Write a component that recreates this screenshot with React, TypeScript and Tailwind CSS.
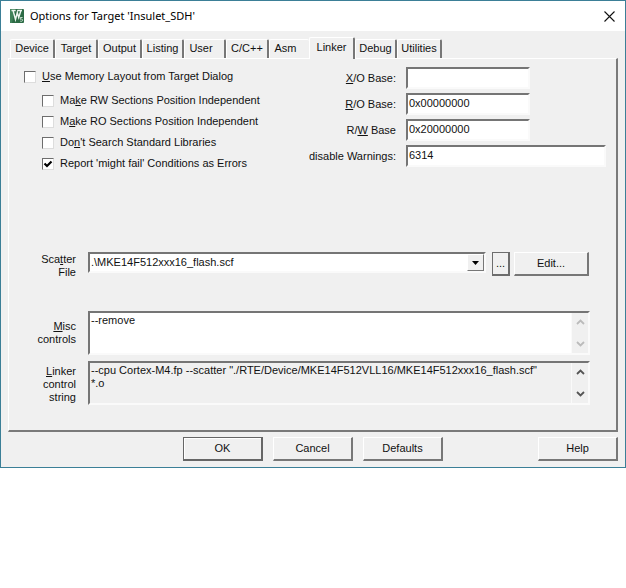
import { useState, type ReactNode } from "react";
import clsx from "clsx";

const TABS = [
  { name: "Device", width: "w-[45px]" },
  { name: "Target", width: "w-[43px]" },
  { name: "Output", width: "w-[44px]" },
  { name: "Listing", width: "w-[42px]" },
  { name: "User", width: "w-[42px]" },
  { name: "C/C++", width: "w-[43px]" },
  { name: "Asm", width: "w-[40px]" },
  { name: "Linker", width: "w-[46px]" },
  { name: "Debug", width: "w-[42px]" },
  { name: "Utilities", width: "w-[45px]" },
];

const sunken =
  "border-2 border-t-[#757575] border-l-[#757575] border-r-[#fafafa] border-b-[#fafafa]";

export default function App() {
  return (
    <main className="min-h-screen bg-white font-['Liberation_Sans',Arial,sans-serif] text-[11px] leading-[13px] text-[#111]">
      <section className="border border-[#3b7f97] bg-[#f0f0f0]">
        <TitleBar title="Options for Target 'Insulet_SDH'" />
        <div className="px-[7px] pt-[6px] pb-[6px]">
          <TabStrip />
          <LinkerPage />
          <footer className="mt-[5px] flex items-center gap-[10px] pl-[175px]">
            <DialogButton isDefault>OK</DialogButton>
            <DialogButton>Cancel</DialogButton>
            <DialogButton>Defaults</DialogButton>
            <div className="ml-auto flex">
              <DialogButton>Help</DialogButton>
            </div>
          </footer>
        </div>
      </section>
    </main>
  );
}

function TitleBar({ title }: { title: string }) {
  return (
    <header className="flex h-[30px] items-center bg-white pr-[10px] pl-[9px]">
      <AppIcon />
      <h1 className="ml-[6px] font-['Noto_Sans','Open_Sans',sans-serif] text-[11px] leading-4 text-black">
        {title}
      </h1>
      <button type="button" aria-label="Close" className="ml-auto">
        <svg width="11" height="11" viewBox="0 0 11 11" className="block">
          <path d="M.5.5l10 10M10.5.5l-10 10" stroke="#111" strokeWidth="1.1" />
        </svg>
      </button>
    </header>
  );
}

function AppIcon() {
  return (
    <svg width="14" height="14" viewBox="0 0 14 14" aria-hidden="true">
      <rect width="14" height="14" rx="1" fill="#2c6b45" />
      <path d="M0 14V1a1 1 0 0 1 1-1h4L2 14z" fill="#3f8259" />
      <path
        d="M1.500 1.500h4.200M7.500 1.500h4.500M3.200 2l2.300 8.500L7.300 3.500l1.400 5L10.800 2"
        fill="none"
        stroke="#eef6f0"
        strokeWidth="1.400"
      />
      <path
        d="M12.600 8.500h-2.300v1.800c1.300-.5 2.300-.1 2.300.9s-1.100 1.400-2.400.9"
        fill="none"
        stroke="#c3dccb"
      />
    </svg>
  );
}

function TabStrip() {
  const [active, setActive] = useState("Linker");
  return (
    <div role="tablist" className="flex h-[21px] items-end pl-[2px]">
      {TABS.map((tab) => {
        const selected = tab.name === active;
        return (
          <button
            key={tab.name}
            type="button"
            role="tab"
            aria-selected={selected}
            onClick={() => setActive(tab.name)}
            className={clsx(
              "shrink-0 rounded-t-xs border-t border-l border-t-white border-l-white text-center whitespace-nowrap",
              tab.width,
              selected
                ? "relative -mb-px h-[22px] border-r-2 border-r-[#777] bg-[#f0f0f0] pb-[3px]"
                : "h-[19px] pb-px",
              !selected && tab.name !== "Asm" && "border-r-2 border-r-[#777]",
              tab.name === "Asm" && "pr-[8px]",
              tab.name === "User" && "pr-[7px]",
            )}
          >
            {tab.name}
          </button>
        );
      })}
    </div>
  );
}

function LinkerPage() {
  return (
    <div
      role="tabpanel"
      className="border-t border-r-2 border-b-2 border-l border-t-white border-r-[#7a7a7a] border-b-[#7a7a7a] border-l-white pr-[10px] pb-[25px] pl-[15px]"
    >
      <div className="flex items-start">
        <div className="flex flex-col pt-[11px]">
          <CheckBox>
            <u>U</u>se Memory Layout from Target Dialog
          </CheckBox>
          <div className="mt-[11px] ml-[18px] flex flex-col gap-2">
            <CheckBox>
              Ma<u>k</u>e RW Sections Position Independent
            </CheckBox>
            <CheckBox>
              M<u>a</u>ke RO Sections Position Independent
            </CheckBox>
            <CheckBox>
              Do<u>n</u>'t Search Standard Libraries
            </CheckBox>
            <CheckBox checked>
              Report 'mi<u>g</u>ht fail' Conditions as Errors
            </CheckBox>
          </div>
        </div>
        <div className="ml-auto grid w-[300px] grid-cols-[90px_1fr] items-center gap-x-[10px] gap-y-1 pt-[8px]">
          <Field id="xo" value="" short>
            <u>X</u>/O Base:
          </Field>
          <Field id="ro" value="0x00000000" short>
            <u>R</u>/O Base:
          </Field>
          <Field id="rw" value="0x20000000" short>
            R/<u>W</u> Base
          </Field>
          <Field id="warnings" value="6314">
            disable Warnings:
          </Field>
        </div>
      </div>

      <div className="mt-[82px] mr-[17px] grid grid-cols-[52px_1fr] items-start gap-x-[12px]">
        <label htmlFor="scatter" className="pt-px text-right">
          Sca<u>t</u>ter
          <br />
          File
        </label>
        <div className="flex items-start">
          <div className={clsx("grid min-w-0 flex-1 grid-cols-[1fr_17px] bg-white", sunken)}>
            <select
              id="scatter"
              className="col-span-2 col-start-1 row-start-1 h-[17px] w-full appearance-none px-px"
            >
              <option>.\MKE14F512xxx16_flash.scf</option>
            </select>
            <span className="pointer-events-none col-start-2 row-start-1 flex items-center justify-center border border-t-white border-r-[#777] border-b-[#777] border-l-white bg-[#f0f0f0]">
              <svg width="7" height="4" viewBox="0 0 7 4">
                <path d="M0 0h7L3.500 4z" fill="#000" />
              </svg>
            </span>
          </div>
          <button
            type="button"
            className="ml-[6px] h-6 w-[18px] border border-r-2 border-b-2 border-[#6d6d6d] text-center"
          >
            ...
          </button>
          <button
            type="button"
            className="ml-1 h-6 w-[75px] border border-r-2 border-b-2 border-t-white border-r-[#777] border-b-[#777] border-l-white"
          >
            Edit...
          </button>
        </div>
      </div>

      <div className="mt-[32px] mr-[16px] grid grid-cols-[52px_1fr] items-start gap-x-[12px] gap-y-[6px]">
        <label htmlFor="misc" className="pt-[9px] text-right">
          <u>M</u>isc
          <br />
          controls
        </label>
        <TextBox id="misc" value="--remove" />
        <label htmlFor="control" className="pt-[4px] text-right">
          <u>L</u>inker
          <br />
          control
          <br />
          string
        </label>
        <TextBox
          id="control"
          readOnly
          value={
            '--cpu Cortex-M4.fp --scatter "./RTE/Device/MKE14F512VLL16/MKE14F512xxx16_flash.scf"\n*.o'
          }
        />
      </div>
    </div>
  );
}

function CheckBox({ checked = false, children }: { checked?: boolean; children: ReactNode }) {
  return (
    <label className="flex items-center gap-[6px] whitespace-nowrap">
      <span className="grid">
        <input
          type="checkbox"
          defaultChecked={checked}
          className="peer col-start-1 row-start-1 h-3 w-3 appearance-none border border-t-[#6d6d6d] border-r-[#ddd] border-b-[#ddd] border-l-[#6d6d6d] bg-white"
        />
        <svg
          viewBox="0 0 12 12"
          className="pointer-events-none invisible col-start-1 row-start-1 h-3 w-3 peer-checked:visible"
        >
          <path d="M2.500 5.500L5 8l4.500-4.500" fill="none" stroke="#000" strokeWidth="2.200" />
        </svg>
      </span>
      <span>{children}</span>
    </label>
  );
}

type FieldProps = {
  id: string;
  value: string;
  short?: boolean;
  children: ReactNode;
};

function Field({ id, value, short = false, children }: FieldProps) {
  return (
    <>
      <label htmlFor={id} className="text-right whitespace-nowrap">
        {children}
      </label>
      <input
        id={id}
        type="text"
        defaultValue={value}
        className={clsx("h-[22px] bg-white pb-[3px] pl-px", short ? "w-[124px]" : "w-full", sunken)}
      />
    </>
  );
}

type TextBoxProps = { id: string; value: string; readOnly?: boolean };

function TextBox({ id, value, readOnly = false }: TextBoxProps) {
  return (
    <div className={clsx("flex h-11", sunken, !readOnly && "bg-white")}>
      <textarea
        id={id}
        defaultValue={value}
        readOnly={readOnly}
        className="min-w-0 flex-1 resize-none overflow-hidden px-px pt-px"
      />
      <div
        className={clsx(
          "flex w-[17px] flex-col items-center justify-between border-l border-l-[#fafafa] bg-[#f0f0f0] py-[6px]",
          readOnly ? "text-[#555]" : "text-[#bbb]",
        )}
      >
        <Chevron d="M1 5l3.500-3.500L8 5" />
        <Chevron d="M1 1l3.500 3.500L8 1" />
      </div>
    </div>
  );
}

function Chevron({ d }: { d: string }) {
  return (
    <svg width="9" height="6" viewBox="0 0 9 6" aria-hidden="true">
      <path d={d} fill="none" stroke="currentColor" strokeWidth="1.800" />
    </svg>
  );
}

function DialogButton({ isDefault = false, children }: { isDefault?: boolean; children: ReactNode }) {
  return (
    <button
      type="button"
      className={clsx(
        "h-6 w-20 border border-r-2 border-b-2",
        isDefault
          ? "border-[#666] shadow-[inset_1px_1px_#fff]"
          : "border-t-white border-r-[#777] border-b-[#777] border-l-white",
      )}
    >
      {children}
    </button>
  );
}
